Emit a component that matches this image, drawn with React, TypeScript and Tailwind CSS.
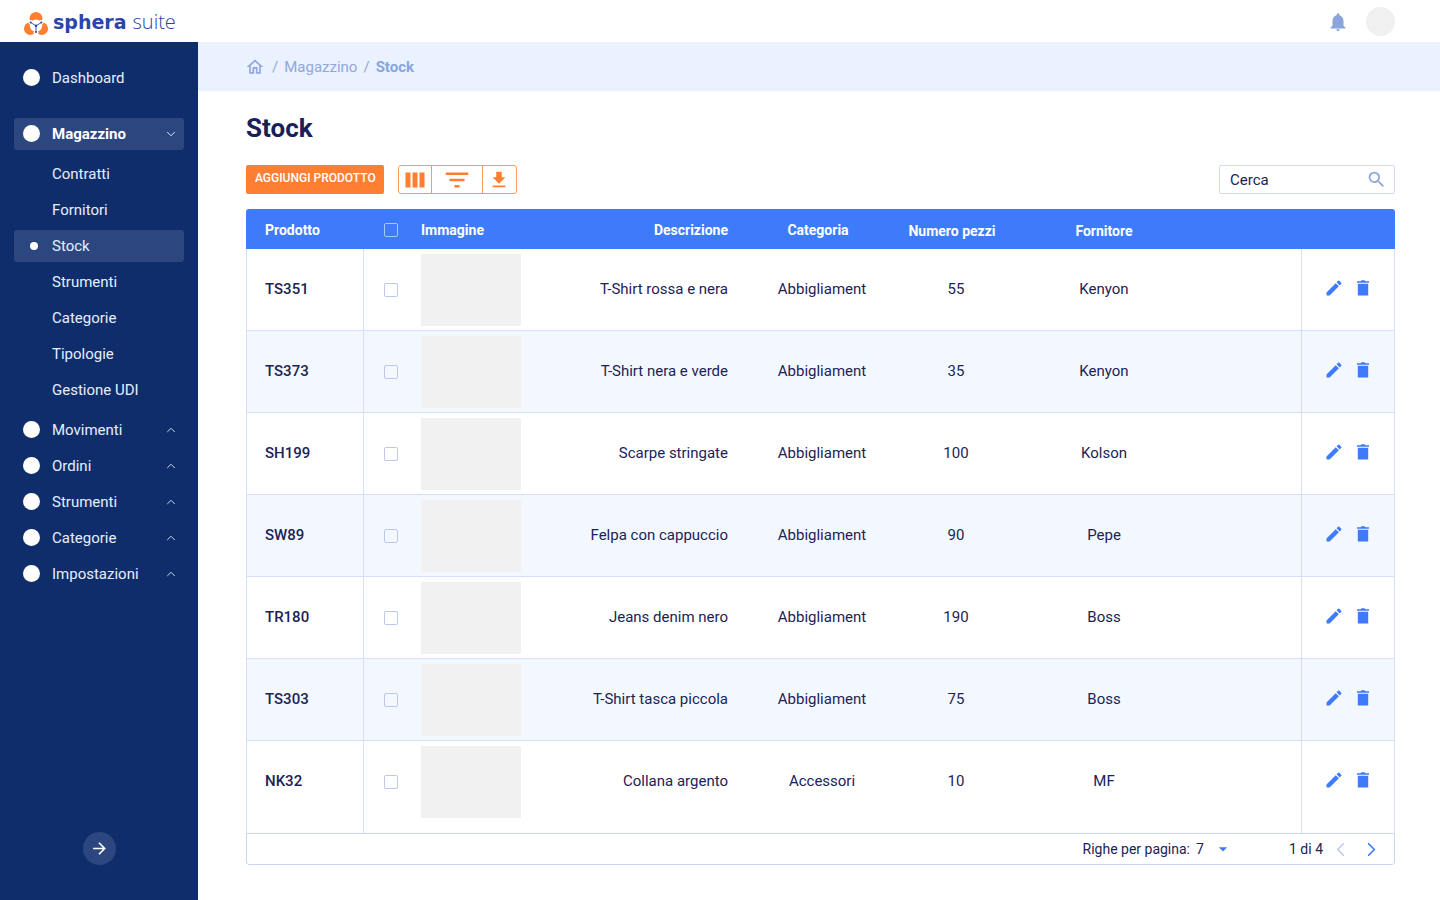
import { ChevronDown, ChevronLeft, ChevronRight, ChevronUp } from "lucide-react";
import {
  MdArrowDropDown,
  MdArrowForward,
  MdEdit,
  MdFileDownload,
  MdFilterList,
  MdNotifications,
  MdOutlineHome,
  MdSearch,
} from "react-icons/md";

const subItems = ["Contratti", "Fornitori", "Stock", "Strumenti", "Categorie", "Tipologie", "Gestione UDI"];
const groups = ["Movimenti", "Ordini", "Strumenti", "Categorie", "Impostazioni"];

const products = [
  { code: "TS351", description: "T-Shirt rossa e nera", category: "Abbigliament", pieces: 55, supplier: "Kenyon" },
  { code: "TS373", description: "T-Shirt nera e verde", category: "Abbigliament", pieces: 35, supplier: "Kenyon" },
  { code: "SH199", description: "Scarpe stringate", category: "Abbigliament", pieces: 100, supplier: "Kolson" },
  { code: "SW89", description: "Felpa con cappuccio", category: "Abbigliament", pieces: 90, supplier: "Pepe" },
  { code: "TR180", description: "Jeans denim nero", category: "Abbigliament", pieces: 190, supplier: "Boss" },
  { code: "TS303", description: "T-Shirt tasca piccola", category: "Abbigliament", pieces: 75, supplier: "Boss" },
  { code: "NK32", description: "Collana argento", category: "Accessori", pieces: 10, supplier: "MF" },
];

function LogoMark() {
  return (
    <svg width="26" height="28" viewBox="0 0 26 28" aria-hidden="true">
      <g fill="#ff7f32">
        <circle cx="13" cy="11.3" r="6.4" />
        <circle cx="7.2" cy="21.6" r="6.3" />
        <circle cx="18.8" cy="21.6" r="6.3" />
      </g>
      <g fill="#fff">
        <circle cx="13" cy="18.6" r="6.2" />
        <circle cx="7.6" cy="15.3" r="2.2" />
        <circle cx="18.4" cy="15.3" r="2.2" />
        <circle cx="13" cy="25.4" r="2.4" />
      </g>
      <path d="M7.6 15.5l5.4 3.3 5.4-3.3M13 18.8v6.2" fill="none" stroke="#2b4bb5" strokeWidth="0.9" />
      <g fill="#2b3f9e">
        <circle cx="7.6" cy="15.5" r="1" />
        <circle cx="18.4" cy="15.5" r="1" />
        <circle cx="13" cy="18.8" r="1.2" />
        <circle cx="13" cy="25" r="1" />
      </g>
    </svg>
  );
}

function ColumnsIcon() {
  return (
    <svg width="20" height="16" viewBox="0 0 20 16" fill="currentColor" aria-hidden="true">
      <rect x="0.5" y="0.5" width="5" height="15" />
      <rect x="7.5" y="0.5" width="5" height="15" />
      <rect x="14.5" y="0.5" width="5" height="15" />
    </svg>
  );
}

function TrashIcon() {
  return (
    <svg width="20" height="20" viewBox="0 0 20 20" fill="currentColor" aria-hidden="true">
      <path d="M4 3.2h3.5l1-.9h3l1 .9H16v1.6H4zM4.8 5.8h10.4v11.7H4.8z" />
    </svg>
  );
}

function Dot() {
  return <span className="mb-px ml-[9px] mr-3 size-[17px] shrink-0 rounded-full bg-white" />;
}

function Sidebar() {
  return (
    <aside className="flex w-[198px] shrink-0 flex-col bg-[#0f2d6b] px-3.5 pb-[35px] pt-5 text-[15px] text-[#e4efff]">
      <nav className="flex flex-col">
        <a href="#dashboard" className="flex h-8 items-center">
          <Dot />
          Dashboard
        </a>
        <button type="button" className="mt-6 flex h-8 items-center rounded-[3px] bg-[#2c477f] pr-1.5 font-bold text-white">
          <Dot />
          <span className="grow text-left">Magazzino</span>
          <ChevronDown size={14} strokeWidth={1.5} />
        </button>
        <ul className="mt-2 flex flex-col gap-1">
          {subItems.map((item) => (
            <li key={item}>
              <a
                href={`#${item}`}
                className={`flex h-8 items-center rounded-[3px] ${item === "Stock" ? "bg-[#2c477f]" : ""}`}
              >
                <span className="flex w-[38px] shrink-0 justify-center pl-0.5">
                  {item === "Stock" && <span className="size-2 rounded-full bg-white" />}
                </span>
                {item}
              </a>
            </li>
          ))}
        </ul>
        <div className="mt-2 flex flex-col gap-1">
          {groups.map((group) => (
            <button key={group} type="button" className="flex h-8 items-center pr-1.5">
              <Dot />
              <span className="grow text-left">{group}</span>
              <ChevronUp size={14} strokeWidth={1.5} />
            </button>
          ))}
        </div>
      </nav>
      <button
        type="button"
        aria-label="Espandi menu"
        className="mt-auto flex size-[33px] items-center justify-center self-center rounded-full bg-[#2c477f] text-white"
      >
        <MdArrowForward size={19} />
      </button>
    </aside>
  );
}

function Toolbar() {
  return (
    <div className="mt-[21px] flex items-center">
      <button
        type="button"
        className="h-[29px] rounded-[2px] bg-[#ff7f32] pb-1 pl-[9px] pr-2 text-xs font-medium text-white"
      >
        AGGIUNGI PRODOTTO
      </button>
      <div className="ml-3.5 flex h-[29px] divide-x divide-[#ff9a5c] rounded-[3px] border border-[#ff9a5c] text-[#ff7f32]">
        <button type="button" aria-label="Colonne" className="flex w-[33px] items-center justify-center">
          <ColumnsIcon />
        </button>
        <button type="button" aria-label="Filtri" className="flex w-[51px] items-center justify-center">
          <MdFilterList size={30} />
        </button>
        <button type="button" aria-label="Scarica" className="flex w-[33px] items-center justify-center">
          <MdFileDownload size={22} />
        </button>
      </div>
      <label className="ml-auto flex h-[29px] w-44 items-center rounded-[2px] border border-[#d3daf7] pl-2.5 pr-[7px]">
        <input
          type="search"
          aria-label="Cerca"
          placeholder="Cerca"
          className="min-w-0 grow bg-transparent pt-0.5 text-[15px] text-[#1b2357] outline-none placeholder:text-[#1b2357]"
        />
        <MdSearch size={21} className="shrink-0 text-[#8fa6d8]" />
      </label>
    </div>
  );
}

const boxClass = "block size-3.5 appearance-none rounded-[2px] border checked:bg-[#3d7bfa]";

function StockTable() {
  return (
    <div className="mt-[15px] overflow-hidden rounded-[3px]">
      <table className="w-full table-fixed border-separate border-spacing-0 text-[15px] text-[#1b2357]">
        <colgroup>
          <col className="w-[118px]" />
          <col className="w-[57px]" />
          <col className="w-[100px]" />
          <col className="w-[234px]" />
          <col className="w-[134px]" />
          <col className="w-[134px]" />
          <col />
          <col className="w-[94px]" />
        </colgroup>
        <thead>
          <tr className="h-10 bg-[#3d7bfa] text-sm text-white">
            <th className="pl-[19px] pt-0.5 text-left font-bold">Prodotto</th>
            <th className="pl-5 pt-0.5">
              <input type="checkbox" aria-label="Seleziona tutto" className={`${boxClass} border-[#a9c6ff]`} />
            </th>
            <th className="pt-0.5 text-left font-bold">Immagine</th>
            <th className="pr-[27px] pt-0.5 text-right font-bold">Descrizione</th>
            <th className="pr-2 pt-0.5 font-bold">Categoria</th>
            <th className="pr-2 pt-1 font-bold">Numero pezzi</th>
            <th className="pr-[116px] pt-1 font-bold">Fornitore</th>
            <th aria-label="Azioni" />
          </tr>
        </thead>
        <tbody className="text-center [&_td]:border-b [&_td]:border-[#d6def8] [&_tr:last-child_td]:border-b-0 [&_tr:last-child_td]:pb-[11px] [&_tr:nth-child(even)]:bg-[#f3f8ff]">
          {products.map((p) => (
            <tr key={p.code} className="h-[82px] last:h-[92px]">
              <td className="border-x pl-[18px] text-left font-medium">{p.code}</td>
              <td className="pl-5">
                <input type="checkbox" aria-label={`Seleziona ${p.code}`} className={`${boxClass} border-[#bcc8ee]`} />
              </td>
              <td>
                <div className="h-[72px] bg-[#f1f1f1]" />
              </td>
              <td className="pr-[27px] text-right">{p.description}</td>
              <td>{p.category}</td>
              <td>{p.pieces}</td>
              <td className="pr-[116px]">{p.supplier}</td>
              <td className="border-x">
                <div className="flex justify-center gap-[9px] pb-1 pl-px text-[#3d7bfa]">
                  <button type="button" aria-label={`Modifica ${p.code}`}>
                    <MdEdit size={20} />
                  </button>
                  <button type="button" aria-label={`Elimina ${p.code}`}>
                    <TrashIcon />
                  </button>
                </div>
              </td>
            </tr>
          ))}
        </tbody>
      </table>
      <div className="flex h-8 items-center justify-end rounded-b-[3px] border border-[#ccd3f5] pr-[11px] text-sm text-[#1b2357]">
        <label htmlFor="rows">Righe per pagina:</label>
        <div className="ml-1.5 flex items-center">
          <select id="rows" className="w-[17px] appearance-none bg-transparent outline-none" defaultValue="7">
            <option>7</option>
            <option>14</option>
            <option>28</option>
          </select>
          <MdArrowDropDown size={20} className="text-[#3d7bfa]" />
        </div>
        <span className="ml-14">1 di 4</span>
        <button type="button" aria-label="Pagina precedente" className="ml-1.5 text-[#bcc8ee]">
          <ChevronLeft size={23} strokeWidth={1.5} />
        </button>
        <button type="button" aria-label="Pagina successiva" className="ml-2 text-[#3d7bfa]">
          <ChevronRight size={23} strokeWidth={1.8} />
        </button>
      </div>
    </div>
  );
}

export default function App() {
  return (
    <div className="flex min-h-screen flex-col bg-white font-['Roboto',sans-serif]">
      <header className="flex h-[42px] items-center pl-[23px] pr-[45px]">
        <a href="#home" className="flex items-center text-[#2b45ad]">
          <LogoMark />
          <span className="ml-1 pt-0.5 font-['DejaVu_Sans',sans-serif] text-[19px] font-bold leading-6">sphera</span>
          <span className="ml-1.5 pt-0.5 font-['Open_Sans',sans-serif] text-xl font-light leading-6">suite</span>
        </a>
        <button type="button" aria-label="Notifiche" className="ml-auto pt-0.5 text-[#8ba5dc]">
          <MdNotifications size={22} />
        </button>
        <button type="button" aria-label="Profilo" className="ml-[17px] size-[29px] rounded-full bg-[#f0f0f0]" />
      </header>
      <div className="flex grow">
        <Sidebar />
        <div className="min-w-0 grow">
          <nav aria-label="Percorso" className="flex h-[49px] items-center bg-[#eaf1ff] pl-[47px] pt-px text-[15px] text-[#93a7dc]">
            <a href="#home" aria-label="Home">
              <MdOutlineHome size={20} />
            </a>
            <span className="ml-[7px] mr-1.5">/</span>
            <a href="#magazzino">Magazzino</a>
            <span className="mx-1.5">/</span>
            <span className="font-bold text-[#86a6e0]">Stock</span>
          </nav>
          <main className="pb-[35px] pl-12 pr-[45px] pt-[21px]">
            <h1 className="text-[26px] font-bold leading-8 text-[#172059]">Stock</h1>
            <Toolbar />
            <StockTable />
          </main>
        </div>
      </div>
    </div>
  );
}
